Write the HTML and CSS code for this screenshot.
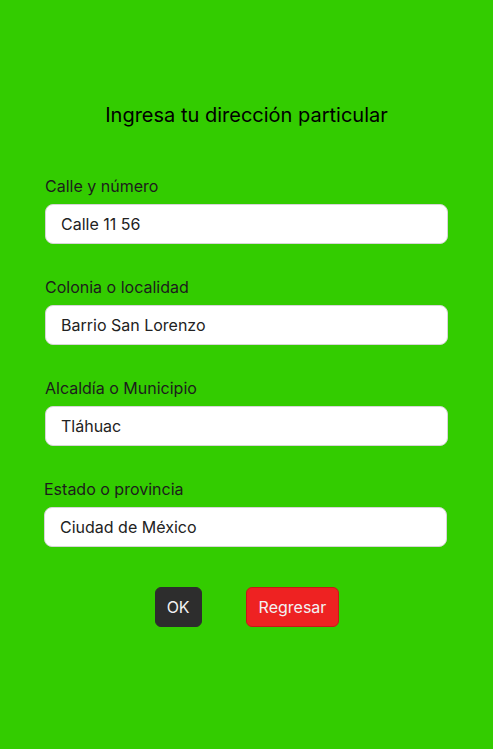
FILE: index.html
```html
<!DOCTYPE html>
<html lang="es">
<head>
<meta charset="utf-8">
<title>Dirección</title>
<link rel="stylesheet" href="styles.css">
</head>
<body>
<main class="page">
  <h1 class="title">Ingresa tu dirección particular</h1>
  <form class="form">
    <div class="field">
      <label class="label">Calle y número</label>
      <div class="input">Calle 11 56</div>
    </div>
    <div class="field">
      <label class="label">Colonia o localidad</label>
      <div class="input">Barrio San Lorenzo</div>
    </div>
    <div class="field">
      <label class="label">Alcaldía o Municipio</label>
      <div class="input">Tláhuac</div>
    </div>
    <div class="field field-shift">
      <label class="label">Estado o provincia</label>
      <div class="input">Ciudad de México</div>
    </div>
    <div class="actions">
      <button type="button" class="btn btn-ok">OK</button>
      <button type="button" class="btn btn-back">Regresar</button>
    </div>
  </form>
</main>
</body>
</html>
```
FILE: styles.css
```css
html, body {
  margin: 0;
  padding: 0;
  background: #33cc00;
  height: 100%;
}
body {
  font-family: Inter, "Noto Sans", sans-serif;
  color: #111;
}
.page {
  padding-top: 103px;
}
.title {
  margin: 0;
  font-size: 20px;
  line-height: 24px;
  font-weight: 400;
  text-align: center;
  color: #000;
}
.form {
  margin-top: 49px;
  padding: 0 45px 0 45px;
  display: flex;
  flex-direction: column;
  gap: 33px;
}
.field {
  display: flex;
  flex-direction: column;
  gap: 8px;
}
.field-shift {
  margin-left: -1px;
  margin-right: 1px;
}
.label {
  font-size: 16px;
  line-height: 20px;
  color: #1c1c1c;
}
.input {
  height: 40px;
  box-sizing: border-box;
  background: #fff;
  border: 1px solid #d6d6d6;
  border-radius: 8px;
  padding: 0 15px;
  display: flex;
  align-items: center;
  font-size: 16px;
  color: #222;
}
.actions {
  margin-top: 7px;
  padding-left: 1px;
  display: flex;
  justify-content: center;
  gap: 44px;
}
.btn {
  height: 40px;
  box-sizing: border-box;
  font-family: Inter, "Noto Sans", sans-serif;
  font-size: 16px;
  border-radius: 6px;
  padding: 0 11px;
  color: #f2f2f2;
  cursor: pointer;
}
.btn-ok {
  background: #2d2d2d;
  border: 1px solid #2d2d2d;
}
.btn-back {
  background: #ee2222;
  border: 1px solid #c81818;
  padding: 0 12px;
}
```
